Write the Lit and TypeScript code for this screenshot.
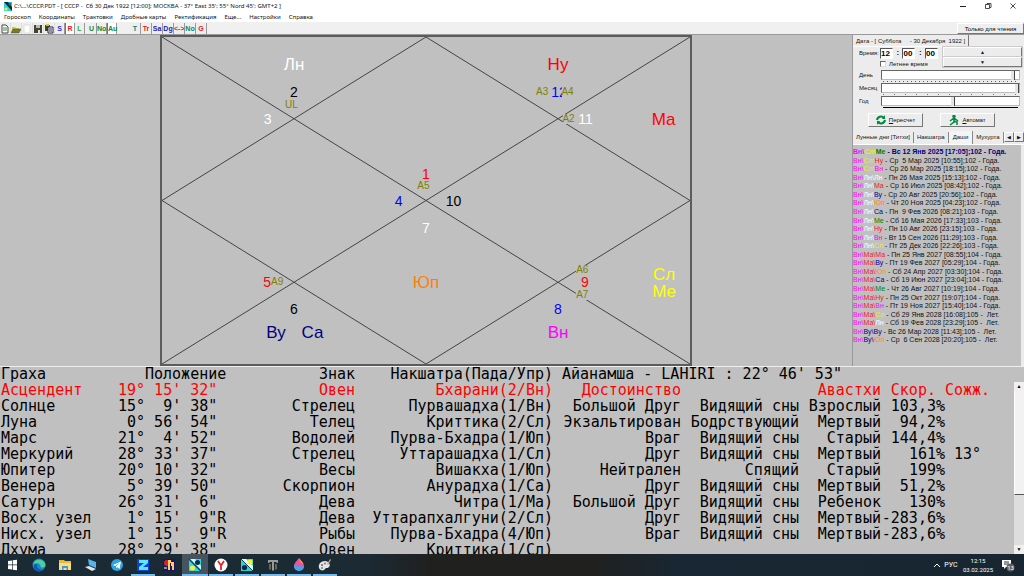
import { LitElement, html, css, svg } from "lit";
import { customElement } from "lit/decorators.js";
import { classMap } from "lit/directives/class-map.js";

type Label = [string, number, number, string, string];

const COLORS: Record<string, string> = {
  "Вн": "#f0f", "Сл": "#e8e838", "Лн": "#fff", "Ма": "#e22", "Ме": "#008000",
  "Ну": "#e22", "Ву": "#000090", "Юп": "#ff8a20", "Са": "#000090",
};

/* text, x %, y %, kind, colour */
const LABELS: Label[] = [
  ["Лн", 25, 8.4, "planet", "#fff"],
  ["2", 25, 16.7, "sign", "#000"],
  ["UL", 24.5, 20.7, "pada", "#808000"],
  ["3", 20, 25, "sign", "#fff"],
  ["Ну", 75, 8.4, "planet", "#f00"],
  ["A3", 72, 16.7, "pada", "#808000"],
  ["12", 75.2, 16.7, "sign", "#00f"],
  ["A4", 76.8, 16.7, "pada", "#808000"],
  ["A2", 77, 25, "pada", "#808000"],
  ["11", 80.2, 25, "sign", "#fff"],
  ["Ма", 95, 25, "planet", "#f00"],
  ["1", 50, 41.8, "sign", "#f00"],
  ["A5", 49.5, 45.7, "pada", "#808000"],
  ["4", 44.8, 50, "sign", "#00f"],
  ["10", 55.2, 50, "sign", "#000"],
  ["7", 50, 58.3, "sign", "#fff"],
  ["Юп", 50, 75, "planet", "#ff8000"],
  ["5", 19.9, 75, "sign", "#f00"],
  ["A9", 21.8, 75, "pada", "#808000"],
  ["6", 25, 83.3, "sign", "#000"],
  ["Ву", 21.6, 90.2, "planet", "#000080"],
  ["Са", 28.5, 90.2, "planet", "#000080"],
  ["A6", 79.6, 71.2, "pada", "#808000"],
  ["9", 80.1, 75, "sign", "#f00"],
  ["A7", 79.6, 79, "pada", "#808000"],
  ["8", 75, 83.3, "sign", "#00f"],
  ["Вн", 75, 90.2, "planet", "#f0f"],
  ["Сл", 95.1, 72.4, "planet", "#ff0"],
  ["Ме", 95.1, 77.8, "planet", "#ff0"],
];

const DASHA: [string, string, string][] = [
  ["Сл", "Ме", "Вс 12 Янв 2025 [17:05];102 - Года."],
  ["Сл", "Ну", "Ср  5 Мар 2025 [10:55];102 - Года."],
  ["Сл", "Вн", "Ср 26 Мар 2025 [18:15];102 - Года."],
  ["Лн", "Лн", "Пн 26 Мая 2025 [15:13];102 - Года."],
  ["Лн", "Ма", "Ср 16 Июл 2025 [08:42];102 - Года."],
  ["Лн", "Ву", "Ср 20 Авг 2025 [20:56];102 - Года."],
  ["Лн", "Юп", "Чт 20 Ноя 2025 [04:23];102 - Года."],
  ["Лн", "Са", "Пн  9 Фев 2026 [08:21];103 - Года."],
  ["Лн", "Ме", "Сб 16 Мая 2026 [17:33];103 - Года."],
  ["Лн", "Ну", "Пн 10 Авг 2026 [23:15];103 - Года."],
  ["Лн", "Вн", "Вт 15 Сен 2026 [11:29];103 - Года."],
  ["Лн", "Сл", "Пт 25 Дек 2026 [22:26];103 - Года."],
  ["Ма", "Ма", "Пн 25 Янв 2027 [08:55];104 - Года."],
  ["Ма", "Ву", "Пт 19 Фев 2027 [05:29];104 - Года."],
  ["Ма", "Юп", "Сб 24 Апр 2027 [03:30];104 - Года."],
  ["Ма", "Са", "Сб 19 Июн 2027 [23:04];104 - Года."],
  ["Ма", "Ме", "Чт 26 Авг 2027 [10:19];104 - Года."],
  ["Ма", "Ну", "Пн 25 Окт 2027 [19:07];104 - Года."],
  ["Ма", "Вн", "Пт 19 Ноя 2027 [15:40];104 - Года."],
  ["Ма", "Сл", "Сб 29 Янв 2028 [16:08];105 -  Лет."],
  ["Ма", "Лн", "Сб 19 Фев 2028 [23:29];105 -  Лет."],
  ["Ву", "Ву", "Вс 26 Мар 2028 [11:43];105 -  Лет."],
  ["Ву", "Юп", "Ср  6 Сен 2028 [20:20];105 -  Лет."],
];

const GRAHAS: string[][] = [
  ["Асцендент", "19° 15' 32\"", "Овен", "Бхарани(2/Вн)", "Достоинство", "", "Авастхи", "Скор. ", "Сожж."],
  ["Солнце", "15°  9' 38\"", "Стрелец", "Пурвашадха(1/Вн)", "Большой Друг", "Видящий сны", "Взрослый", "103,3%", ""],
  ["Луна", " 0° 56' 54\"", "Телец", "Криттика(2/Сл)", "Экзальтирован", "Бодрствующий", "Мертвый", "94,2%", ""],
  ["Марс", "21°  4' 52\"", "Водолей", "Пурва-Бхадра(1/Юп)", "Враг", "Видящий сны", "Старый", "144,4%", ""],
  ["Меркурий", "28° 33' 37\"", "Стрелец", "Уттарашадха(1/Сл)", "Друг", "Видящий сны", "Мертвый", "161%", " 13°"],
  ["Юпитер", "20° 10' 32\"", "Весы", "Вишакха(1/Юп)", "Нейтрален", "Спящий", "Старый", "199%", ""],
  ["Венера", " 5° 39' 50\"", "Скорпион", "Анурадха(1/Са)", "Друг", "Видящий сны", "Мертвый", "51,2%", ""],
  ["Сатурн", "26° 31'  6\"", "Дева", "Читра(1/Ма)", "Большой Друг", "Видящий сны", "Ребенок", "130%", ""],
  ["Восх. узел", " 1° 15'  9\"R", "Дева", "Уттарапхалгуни(2/Сл)", "Друг", "Видящий сны", "Мертвый", "-283,6%", ""],
  ["Нисх. узел", " 1° 15'  9\"R", "Рыбы", "Пурва-Бхадра(4/Юп)", "Враг", "Видящий сны", "Мертвый", "-283,6%", ""],
  ["Дхума", "28° 29' 38\"", "Овен", "Криттика(1/Сл)", "", "", "", "", ""],
];

@customElement("title-bar")
class TitleBar extends LitElement {
  static styles = css`
    :host { display: block; background: #fff; font: 6px/12px "Noto Sans", sans-serif; color: #111; }
    .bar { display: flex; align-items: center; height: 12px; padding-left: 4px; gap: 2px; }
    .title { flex: 1; white-space: pre; }
    button { border: 0; background: none; padding: 0; width: 23px; height: 12px; display: grid; place-items: center; }
    .menu { display: flex; gap: 8px; height: 10px; line-height: 10px; padding-left: 4px; }
    .menu a { color: #111; text-decoration: none; }
  `;
  render() {
    return html`
      <header class="bar">
        <svg width="8" height="9" viewBox="0 0 8 9"><path fill="#20d8e8" d="M0 0h8v9H0z"/><path d="M0 0l8 9V5L4 0z" fill="#123"/><circle cx="2" cy="7" r="1.6" fill="#ee2"/><circle cx="6" cy="2" r="1.5" fill="#087"/></svg>
        <span class="title">C:\\...\\СССР.PDT - [ СССР -  Сб 30 Дек 1922 [12:00]; МОСКВА - 37° East 35'; 55° Nord 45'; GMT+2 ]</span>
        <button aria-label="Свернуть"><svg width="8" height="8"><path d="M1 4.5h6" stroke="#222"/></svg></button>
        <button aria-label="Развернуть"><svg width="8" height="8" fill="none" stroke="#222" stroke-width=".8"><path d="M1.5 2.5h4v4h-4zM3 2.5v-1h4v4H5.500"/></svg></button>
        <button aria-label="Закрыть"><svg width="8" height="8"><path d="M1.500 1.500l5 5m0-5l-5 5" stroke="#222" stroke-width=".8"/></svg></button>
      </header>
      <nav class="menu">
        ${["Гороскоп", "Координаты", "Трактовки", "Дробные карты", "Ректификация", "Еще...", "Настройки", "Справка"].map((m) => html`<a href="#">${m}</a>`)}
      </nav>`;
  }
}

@customElement("tool-bar")
class ToolBar extends LitElement {
  static styles = css`
    :host { display: flex; height: 12px; background: #f0f0f0; font: bold 7px/10px "Liberation Sans", sans-serif; }
    .group { display: flex; }
    .wide { margin: 0 13px 0 2px; }
    button { font: inherit; padding: 0; width: 11px; height: 11px; margin-top: 1px; border: 0; border-right: 1px solid #999; background: #eee; display: grid; place-items: center; white-space: nowrap; }
    .narrow button { width: 10px; }
    .files button { border-right-color: #ddd; }
    .group .down { background: #fff; border-left: 1px solid #777; }
    .spacer { flex: 1; }
    .readonly { width: 67px; font-weight: normal; font-size: 6px; border: 1px solid; border-color: #fff #777 #777 #fff; }
  `;
  private icons = [
    svg`<path d="M2 1h4l2 2v6H2z" fill="#fff" stroke="#444"/><path d="M3 4h4M3 6h4" stroke="#484"/>`,
    svg`<path d="M1 8V3h3l1 1h3v4z" fill="#cc3"/><path d="M0 9l2-4h8L8 9z" fill="#774" stroke="#552" stroke-width=".5"/>`,
    svg`<path d="M2 1h6v8H2z" fill="#fff" stroke="#ddd"/>`,
    svg`<path d="M1 1h8v8H1z" fill="#443"/><path d="M3 1h4v3H3z" fill="#bba"/><path d="M5 6h2v3H5z" fill="#ddd"/>`,
    svg`<path d="M1 1h5v6H1z" fill="#442"/><path d="M4 3h5v6H4z" fill="#fff" stroke="#224"/><path d="M2 0h3v2H2z" fill="#cc3"/><path d="M5 5h3M5 7h3" stroke="#226"/>`,
  ];
  private letter(t: string, c: string, down = false) {
    return html`<button class=${classMap({ down })} style="color:${c}">${t}</button>`;
  }
  render() {
    return html`
      <div class="group files">${this.icons.map((i) => html`<button aria-label="Файл"><svg width="10" height="10">${i}</svg></button>`)}</div>
      <div class="group narrow">${this.letter("S", "#33c")}${this.letter("R", "#d22", true)}${this.letter("L", "#3a3")}</div>
      <div class="group narrow wide">${this.letter("U", "#183")}${this.letter("No", "#183")}${this.letter("Au", "#183", true)}</div>
      <div class="group">${this.letter("T", "#087")}${this.letter("Tr", "#d22")}${this.letter("Sa", "#22b")}${this.letter("Dg", "#22b")}${this.letter("<->", "#d22")}${this.letter("No", "#087")}${this.letter("G", "#d22")}</div>
      <span class="spacer"></span>
      <button class="readonly">Только для чтения</button>`;
  }
}

@customElement("birth-chart")
class BirthChart extends LitElement {
  static styles = css`
    :host { display: block; border: 2px solid #5c5c5c; background: #c0c0c0; font-family: "Liberation Sans", sans-serif; }
    .canvas { position: relative; height: 100%; }
    svg { display: block; width: 100%; height: 100%; }
    .label { position: absolute; transform: translate(-50%, -50%); line-height: 1; }
    .planet { font-size: 17px; }
    .sign { font-size: 14px; }
    .pada { font-size: 10px; background: #c0c0c0; }
  `;
  render() {
    const seg = [["0", "0", "100%", "100%"], ["0", "100%", "100%", "0"], ["0", "50%", "50%", "0"], ["50%", "0", "100%", "50%"], ["100%", "50%", "50%", "100%"], ["50%", "100%", "0", "50%"]];
    return html`<div class="canvas">
      <svg stroke="#444" stroke-width="1">${seg.map(([a, b, c, d]) => svg`<line x1=${a} y1=${b} x2=${c} y2=${d}/>`)}</svg>
      ${LABELS.map(([t, x, y, kind, c]) => html`<span class="label ${kind}" style="left:${x}%;top:${y}%;color:${c}">${t}</span>`)}
    </div>`;
  }
}

@customElement("side-panel")
class SidePanel extends LitElement {
  static styles = css`
    :host { display: flex; flex-direction: column; background: #ececec; font: 6px/8px "Liberation Sans", sans-serif; color: #111; border-left: 1px solid #999; }
    button, input { font: inherit; color: inherit; padding: 0; margin: 0; box-sizing: border-box; }
    .datetab { align-self: flex-start; border: 0; border-right: 1px solid #777; background: none; height: 11px; padding: 0 3px; white-space: pre; }
    .form { border-top: 1px solid #fff; padding: 0 2px 0 6px; display: flex; flex-direction: column; }
    .time { display: grid; grid-template-columns: 20px 54px 1fr; gap: 0 5px; }
    .time label { line-height: 13px; }
    .clock { display: flex; align-items: center; justify-content: space-between; font-weight: bold; font-size: 8px; height: 12px; margin-left: -4px; }
    .clock input { width: 13px; height: 11px; border: 1px solid #888; border-color: #555 #fff #fff #555; background: #fff; font-weight: bold; color: #000; }
    .spin { grid-column: 3; grid-row: 1 / 3; display: flex; flex-direction: column; }
    .spin button, .action, .arrow { border: 1px solid; border-color: #fff #777 #777 #fff; background: #ececec; }
    .spin button { height: 10px; line-height: 6px; font-size: 5px; box-shadow: 0 0 0 1px #ccc; }
    .dst { grid-column: 2; display: flex; gap: 3px; align-items: center; height: 8px; white-space: nowrap; margin-left: -4px; }
    .dst input { appearance: none; width: 6px; height: 6px; background: #fff; border: 1px solid #666; border-color: #666 #ddd #ddd #666; }
    .sliders { display: grid; grid-template-columns: 22px 1fr; margin-top: 2px; padding-right: 2px; }
    .sliders label { line-height: 10px; height: 13px; }
    .track { display: block; height: 13px; }
    .track input { display: block; appearance: none; width: 100%; height: 10px; background: #fff; border: 1px solid; border-color: #666 #bbb #bbb #666; }
    .track input::-webkit-slider-thumb { appearance: none; width: 4px; height: 9px; background: #e4e4e4; border-right: 1px solid #444; }
    .ticks { height: 1px; margin: 1px 2px 0; background: repeating-linear-gradient(90deg, #555 0 1px, transparent 1px 4px); }
    .months { background: repeating-linear-gradient(90deg, #777 0 1px, transparent 1px 11px); }
    .solid { background: #000; }
    .actions { display: flex; gap: 17px; padding: 4px 27px 0 9px; }
    .action { flex: 1; height: 14px; display: flex; justify-content: center; align-items: center; gap: 3px; }
    .tabs { display: flex; align-items: center; height: 14px; margin-top: 3px; border-bottom: 1px solid #fff; white-space: nowrap; }
    .tab { border: 0; border-right: 1px solid #888; background: none; height: 11px; padding: 0 3px; }
    .tabs .current { height: 13px; background: #f4f4f4; padding: 0 4px; }
    .arrows { margin-left: auto; display: flex; }
    .arrow { width: 10px; height: 10px; font-size: 5px; line-height: 6px; }
    .list { flex: 1; min-height: 0; list-style: none; margin: 0; padding: 3px 0 21px 0; background: #c0c0c0; display: grid; grid-auto-rows: minmax(0, 1fr); white-space: pre; border-right: 3px solid #ececec; font-size: 7px; }
    .list li { line-height: 8px; }
    .list .now { font-weight: bold; color: #000080; }
  `;
  render() {
    return html`
      <button class="datetab">Дата - [ Суббота     - 30 Декабря  1922 ]</button>
      <div class="form">
        <div class="time">
          <label for="h">Время:</label>
          <span class="clock"><input id="h" value="12" />:<input aria-label="Минуты" value="00" />:<input aria-label="Секунды" value="00" /></span>
          <label class="dst"><input type="checkbox" />Летнее время</label>
          <span class="spin"><button>▲</button><button>▼</button></span>
        </div>
        <div class="sliders">
          <label for="d">День</label><span class="track"><input id="d" type="range" min="1" max="31" value="30" /><div class="ticks"></div></span>
          <label for="m">Месяц</label><span class="track"><input id="m" type="range" min="1" max="12" value="12" /><div class="ticks months"></div></span>
          <label for="y">Год</label><span class="track"><input id="y" type="range" min="0" max="100" value="52" /><div class="ticks solid"></div></span>
        </div>
        <div class="actions">
          <button class="action"><svg width="10" height="10" fill="none" stroke="#084" stroke-width="2"><path d="M1 5a4 4 0 0 1 7-2M9 5a4 4 0 0 1-7 2"/><path d="M9 0v4H6zM1 10V6h3z" fill="#084" stroke="none"/></svg><span><u>П</u>ересчет</span></button>
          <button class="action"><svg width="10" height="11" fill="none" stroke="#084" stroke-width="1.500"><circle cx="5" cy="1.500" r="1" fill="#084"/><path d="M5 3v4L1 10M5 6l3 1v3M5 3L1 6M5 3l4 3"/></svg><span><u>А</u>втомат</span></button>
        </div>
      </div>
      <div class="tabs">
        <button class="tab">Лунные дни [Титхи]</button><button class="tab">Накшатра</button><button class="tab current">Даши</button><button class="tab">Мухурта</button>
        <span class="arrows"><button class="arrow">◀</button><button class="arrow">▶</button></span>
      </div>
      <ul class="list">
        ${DASHA.map(([b, c, text], i) => {
          const a = "Вн";
          return html`<li class=${classMap({ now: i === 0 })}><span style="color:${COLORS[a]}">${a}\\</span><span style="color:${COLORS[b]}">${b}\\</span><span style="color:${COLORS[c]}">${c}</span> - ${text}</li>`;
        })}
      </ul>`;
  }
}

@customElement("graha-table")
class GrahaTable extends LitElement {
  static styles = css`
    :host { display: flex; background: #c0c0c0; border-top: 1px solid #eee; overflow: hidden; font: 15px/16px "DejaVu Sans Mono", monospace; color: #000; }
    .data { flex: 1; min-width: 0; }
    table { border-collapse: collapse; table-layout: fixed; width: 990px; white-space: pre; }
    th, td { padding: 0; font-weight: normal; text-align: right; height: 16px; }
    thead th { height: 15px; line-height: 15px; }
    .left { text-align: left; }
    .name { padding-left: 1px; }
    .inset { padding-left: 27px; }
    .ayan { padding-left: 9px; }
    .red { color: #f00; }
    .scroll { width: 10px; margin-top: 15px; display: flex; flex-direction: column; background: #dedede; }
    .scroll button { height: 9px; padding: 0; border: 0; background: #f0f0f0; font-size: 5px; line-height: 9px; }
    .thumb { flex: 104; background: #f2f2f2; border-bottom: 1px solid #555; border-left: 1px solid #fff; }
    .rest { flex: 50; }
  `;
  render() {
    const widths = [118, 109, 128, 198, 128, 118, 82, 64, 45];
    const cls = ["left name", "left", "", "", "", "", "", "", "left"];
    return html`
      <div class="data"><table>
        <colgroup>${widths.map((w) => html`<col style="width:${w}px" />`)}</colgroup>
        <thead><tr>
          <th class="left name">Граха</th><th class="left inset">Положение</th><th>Знак</th><th>Накшатра(Пада/Упр)</th>
          <th class="left ayan" colspan="5">Айанамша - LAHIRI : 22° 46' 53"</th>
        </tr></thead>
        <tbody>${GRAHAS.map((r, i) => html`<tr class=${classMap({ red: i === 0 })}>${r.map((c, j) => html`<td class=${cls[j]}>${c}</td>`)}</tr>`)}</tbody>
      </table></div>
      <div class="scroll"><button aria-label="Вверх">▲</button><div class="thumb"></div><div class="rest"></div><button aria-label="Вниз">▼</button></div>`;
  }
}

@customElement("task-bar")
class TaskBar extends LitElement {
  static styles = css`
    :host { display: flex; height: 22px; background: linear-gradient(90deg, #1a2b35, #1b2a33 36%, #20201f 42%, #20201f 58%, #182733 66%, #182632); color: #fff; font: 7px/9px Roboto, sans-serif; }
    button { border: 0; padding: 0; background: none; color: inherit; font: inherit; display: grid; place-items: center; }
    .app { width: 26px; border-bottom: 2px solid transparent; padding-top: 1px; }
    .open { border-image: linear-gradient(90deg, transparent 10%, #76b9ed 10% 90%, transparent 90%) 2; }
    .active { background: #45545f; border-bottom-color: #76b9ed; }
    .tray { margin-left: auto; display: flex; align-items: center; padding-right: 6px; }
    .tray button { min-width: 14px; }
    .tray .clock { width: 40px; font-size: 6px; }
    .clock span { display: block; }
    .tray .note { width: 20px; }
  `;
  private apps: [string, unknown, string][] = [
    ["Пуск", svg`<path fill="#fff" d="M2 3l4-.6v4.200H2zM6.700 2.300L11 1.700v4.900H6.700zM2 7.300h4v4.200L2 11zM6.700 7.300H11v5l-4.300-.6z"/>`, ""],
    ["Edge", svg`<circle cx="7" cy="7" r="6.500" fill="#1a86d8"/><path d="M1 6a6.500 6.500 0 0 1 12.500 1c0 3-4 3-5 1.500C9 6 5 4 1 6z" fill="#4cd09a"/><path d="M5 7c0 4 3 5 6 4.500-4 4-9 1-9-3C2 6 5 5 5 7z" fill="#1458a8"/>`, ""],
    ["Проводник", svg`<path d="M1 2h5l1 1h6v9H1z" fill="#e9b93c"/><path d="M1 5h12v7H1z" fill="#fbdc80"/><path d="M4 8h6v4H8.500v-2h-3v2H4z" fill="#3c9adf"/>`, ""],
    ["Сеть", svg`<path d="M4 1l8 3v6L5 7z" fill="#56b4ec"/><path d="M1 9l4-1 7 3-4 2z" fill="#dce6ee"/>`, ""],
    ["Telegram", svg`<circle cx="7" cy="7" r="6" fill="#2ca5e0"/><path d="M3 7l8-3.500L9.500 11 7 9l-1 1.500V8.500L9.500 5 5 8z" fill="#fff"/>`, ""],
    ["Z", svg`<path fill="#0645d8" d="M1 1h12v12H1z"/><path d="M3 2h9v3l-5 4h5v3H3V9l5-4H3z" fill="#5fe4ff"/>`, "open"],
    ["Календарь", svg`<path fill="#1a1660" d="M1 1h12v12H1z"/><circle cx="5" cy="5" r="3" fill="#d22"/><path d="M6 2h3v3H8v7H6zM9 4h3v8h-2V8H9z" fill="#fc6"/><path d="M2 10h3" stroke="#fff"/>`, ""],
    ["Гороскоп", svg`<path fill="#2fd5e0" d="M1 1h12v12H1z"/><path d="M1 1l12 12V8L7 1z" fill="#bff"/><path d="M1 1l12 12" stroke="#10406a" stroke-width="1.500"/><circle cx="9.500" cy="4.500" r="2.500" fill="#13294a"/><circle cx="4.500" cy="10" r="2.500" fill="#fe3"/>`, "active"],
    ["Яндекс", svg`<circle cx="7" cy="7" r="6.500" fill="#fff"/><path d="M4 3l3 4.500V12M10 3L7 7.500" fill="none" stroke="#e22" stroke-width="1.800"/>`, "open"],
    ["Карта", svg`<path fill="#2fd5c0" d="M1 1h12v12H1z"/><path d="M1 1l12 12V8L6 1z" fill="#dff"/><path d="M1 1l12 12" stroke="#10406a"/><circle cx="10" cy="4" r="2.600" fill="#fe3"/><circle cx="4.500" cy="9.500" r="2.600" fill="#13205a"/>`, "open"],
    ["Танки", svg`<path d="M2 2h10v3h-1.500V4H8v8l-1 1-1-1V4H3.500v1H2z" fill="#999"/><path d="M3 6v5l2 1V6zM11 6v5l-2 1V6z" fill="#665"/>`, "open"],
    ["Paint 3D", svg`<path d="M7 0c2 3 5 5 5 8a5 5 0 0 1-10 0c0-3 3-5 5-8z" fill="#e8559c"/><path d="M2 8c2-2 4 2 10 0a5 5 0 0 1-10 0z" fill="#35a9ee"/><path d="M7 0c2 3 4 4 4.500 6C9 5 8 4 7 0z" fill="#f9a04c"/>`, "open"],
    ["Paint", svg`<path d="M1 10C0 6 3 3 7 3s6 4 4 6-3 0-4 2-5 2-6-1z" fill="#dfe6e8"/><circle cx="4" cy="7" r="1" fill="#d33"/><circle cx="7" cy="5.500" r="1" fill="#38c"/><circle cx="4" cy="10" r="1" fill="#3a4"/><path d="M9 6l3-5 1 1-3 5z" fill="#c98"/>`, "open"],
  ];
  render() {
    return html`
      ${this.apps.map(([n, icon, state]) => html`<button class="app ${state}" aria-label=${n}><svg width="14" height="14">${icon}</svg></button>`)}
      <div class="tray">
        <button aria-label="Значки"><svg width="8" height="6"><path d="M1 5l3-3 3 3" fill="none" stroke="#fff"/></svg></button>
        <button>РУС</button>
        <button class="clock"><div><span>12:15</span><span>03.02.2025</span></div></button>
        <button class="note" aria-label="Уведомления"><svg width="14" height="14"><path d="M1 2h9v7H5l-2 2V9H1z" fill="#fff"/><path d="M3 4h5M3 6h5" stroke="#234"/><circle cx="9.500" cy="9.500" r="4" fill="#665f58"/><text x="9.500" y="12" font-size="6" text-anchor="middle" fill="#fff">13</text></svg></button>
      </div>`;
  }
}

@customElement("app-root")
class AppRoot extends LitElement {
  static styles = css`
    :host { display: flex; flex-direction: column; height: 100vh; background: #c0c0c0; overflow: hidden; }
    .main { flex: 1; min-height: 0; display: grid; grid-template-columns: 1fr 172px; border-top: 1px solid #999; }
    .stage { display: grid; grid-template-columns: 160px 1fr 160px; }
    .stage birth-chart { grid-column: 2; }
    graha-table { flex: 0 0 188px; box-sizing: border-box; }
    side-panel { min-height: 0; }
  `;
  render() {
    return html`
      <title-bar></title-bar>
      <tool-bar></tool-bar>
      <main class="main">
        <div class="stage"><birth-chart></birth-chart></div>
        <side-panel></side-panel>
      </main>
      <graha-table></graha-table>
      <task-bar></task-bar>`;
  }
}
